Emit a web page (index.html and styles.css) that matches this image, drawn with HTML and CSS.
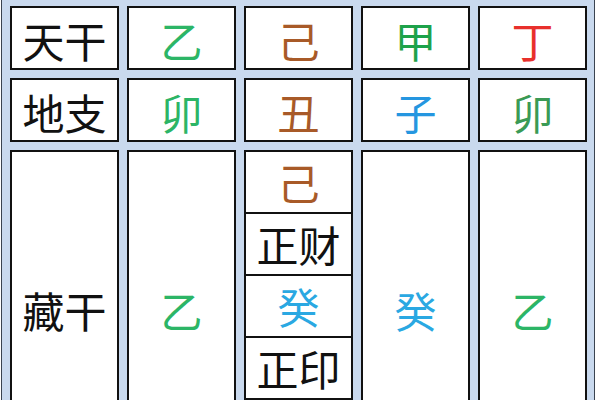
FILE: index.html
```html
<!DOCTYPE html>
<html lang="zh">
<head>
    <meta charset="UTF-8">
    <meta name="viewport" content="width=device-width, initial-scale=1.0">
    <title>八字排盘</title>
    <link rel="stylesheet" href="styles.css">
</head>
<body>
    <div class="chart">
        <!-- row above, scrolled out of view -->
        <div class="cell"></div>
        <div class="cell"></div>
        <div class="cell"></div>
        <div class="cell"></div>
        <div class="cell"></div>

        <div class="cell label">天干</div>
        <div class="cell wood">乙</div>
        <div class="cell earth">己</div>
        <div class="cell wood-deep">甲</div>
        <div class="cell fire">丁</div>

        <div class="cell label">地支</div>
        <div class="cell wood">卯</div>
        <div class="cell earth">丑</div>
        <div class="cell water-deep">子</div>
        <div class="cell wood-dark">卯</div>

        <div class="cell label">藏干</div>
        <div class="cell wood">乙</div>
        <div class="cell stack">
            <div class="sub earth">己</div>
            <div class="sub">正财</div>
            <div class="sub water">癸</div>
            <div class="sub">正印</div>
        </div>
        <div class="cell water">癸</div>
        <div class="cell wood">乙</div>
    </div>
</body>
</html>
```

FILE: styles.css
```css
body {
    margin: 0;
    background: #ffffff;
    font-family: 'Noto Sans CJK SC', 'Noto Sans', sans-serif;
    overflow: hidden;
}

.chart {
    display: grid;
    grid-template-columns: repeat(5, 109px);
    grid-template-rows: 64px 64px 64px 316px;
    gap: 8px;
    width: max-content;
    margin: -66px 0 0 1px;
    padding: 0 7px 0 8px;
    background: #c9d9ee;
    border-left: 1px solid #3a4350;
    border-right: 1px solid #3a4350;
}

.cell {
    box-sizing: border-box;
    display: flex;
    align-items: center;
    justify-content: center;
    background: #ffffff;
    border: 2px solid #111111;
    font-size: 42px;
    line-height: 1;
    color: #111111;
    padding-top: 3px;
}

.stack {
    flex-direction: column;
    justify-content: flex-start;
    align-items: stretch;
    overflow: hidden;
    padding-top: 0;
}

.sub {
    box-sizing: border-box;
    flex: 0 0 62px;
    display: flex;
    align-items: center;
    justify-content: center;
    border-bottom: 2px solid #111111;
}

.wood { color: #2cb566; }
.wood-deep { color: #1ea24a; }
.wood-dark { color: #3a9a55; }
.earth { color: #a85a28; }
.fire { color: #e8302c; }
.water { color: #2aa8e2; }
.water-deep { color: #2596e0; }
```
